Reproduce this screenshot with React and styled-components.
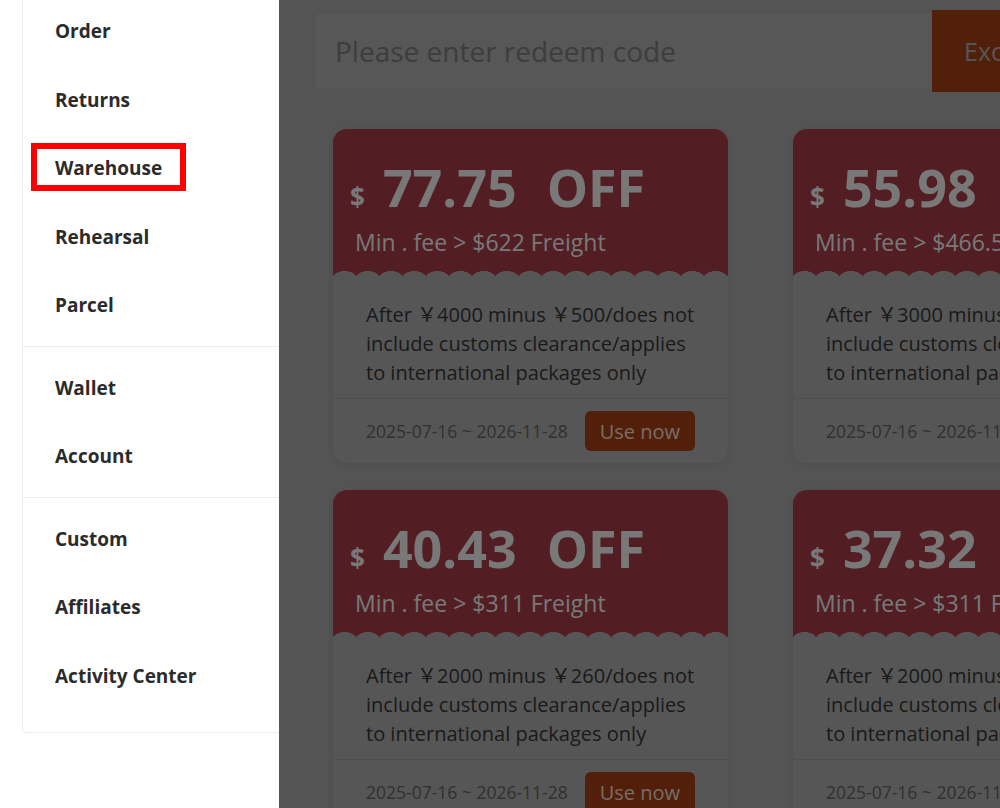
import React from 'react';
import styled, { createGlobalStyle } from 'styled-components';

const GlobalStyle = createGlobalStyle`
  html, body {
    margin: 0;
    padding: 0;
    background: #fff;
    overflow: hidden;
  }
  body {
    font-family: "Open Sans", "Noto Sans", "Noto Sans CJK SC", sans-serif;
  }
`;

const menuGroups = [
  ['Order', 'Returns', 'Warehouse', 'Rehearsal', 'Parcel'],
  ['Wallet', 'Account'],
  ['Custom', 'Affiliates', 'Activity Center'],
];

const coupons = [
  { amount: '77.75', min: '$622', rule: 'After ￥4000 minus ￥500/does not include customs clearance/applies to international packages only' },
  { amount: '55.98', min: '$466.56', rule: 'After ￥3000 minus ￥380/does not include customs clearance/applies to international packages only' },
  { amount: '40.43', min: '$311', rule: 'After ￥2000 minus ￥260/does not include customs clearance/applies to international packages only' },
  { amount: '37.32', min: '$311', rule: 'After ￥2000 minus ￥240/does not include customs clearance/applies to international packages only' },
];

const App = () => {
  return (
    <>
      <GlobalStyle />
      <Page>
        <SideColumn>
          <SideCard>
            {menuGroups.map((group, gi) => (
              <MenuGroup key={gi} last={gi === menuGroups.length - 1}>
                {group.map((name) => (
                  <MenuItem key={name} highlight={name === 'Warehouse'}>
                    {name}
                  </MenuItem>
                ))}
              </MenuGroup>
            ))}
          </SideCard>
        </SideColumn>

        <Main>
          <RedeemRow>
            <RedeemInput placeholder="Please enter redeem code" />
            <ExchangeButton>Exchange</ExchangeButton>
          </RedeemRow>

          <CouponGrid>
            {coupons.map((c) => (
              <Coupon key={c.amount}>
                <CouponHead>
                  <PriceLine>
                    <Dollar>$</Dollar>
                    <Amount>{c.amount}</Amount>
                    <Off>OFF</Off>
                  </PriceLine>
                  <MinFee>Min . fee &gt; {c.min} Freight</MinFee>
                </CouponHead>
                <CouponBody>
                  <Rule>{c.rule}</Rule>
                </CouponBody>
                <CouponFoot>
                  <Dates>2025-07-16 ~ 2026-11-28</Dates>
                  <UseButton>Use now</UseButton>
                </CouponFoot>
              </Coupon>
            ))}
          </CouponGrid>

          <Mask />
        </Main>
      </Page>
    </>
  );
};

export default App;

const Page = styled.div`
  display: flex;
  width: 1000px;
  height: 808px;
  overflow: hidden;
`;

const SideColumn = styled.aside`
  flex: 0 0 279px;
  padding-left: 22px;
  box-sizing: border-box;
  background: #fff;
`;

const SideCard = styled.nav`
  margin-top: -11px;
  border: 1px solid #ececec;
  border-right: none;
  border-radius: 4px 0 0 4px;
  background: #fff;
`;

const MenuGroup = styled.ul`
  list-style: none;
  margin: 0;
  padding: 7px 0 ${(p) => (p.last ? '22px' : '6px')};
  border-bottom: ${(p) => (p.last ? 'none' : '1px solid #ececec')};
`;

const MenuItem = styled.li`
  position: relative;
  height: 68.5px;
  display: flex;
  align-items: center;
  padding-left: 32px;
  font-size: 19px;
  font-weight: 700;
  color: #2b2b2b;

  ${(p) =>
    p.highlight &&
    `
    &::after {
      content: '';
      position: absolute;
      left: 8px;
      top: 9px;
      width: 155px;
      height: 48px;
      box-sizing: border-box;
      border: 6px solid #ff0000;
    }
  `}
`;

const Main = styled.main`
  position: relative;
  flex: 1;
  padding: 10px 0 0 35px;
  background: #a8a8a8;
  min-width: 0;
`;

const Mask = styled.div`
  position: absolute;
  inset: 0;
  background: rgba(0, 0, 0, 0.5);
`;

const RedeemRow = styled.div`
  display: flex;
  align-items: center;
  width: 1000px;
`;

const RedeemInput = styled.input`
  width: 618px;
  height: 78px;
  box-sizing: border-box;
  border: 1px solid #a2a2a2;
  border-right: none;
  border-radius: 4px 0 0 4px;
  background: #aeaeae;
  padding: 0 20px;
  font-family: "Open Sans", sans-serif;
  font-size: 28px;
  outline: none;

  &::placeholder {
    color: #7a7a7a;
  }
`;

const ExchangeButton = styled.button`
  height: 82px;
  width: 160px;
  border: none;
  background: #a44014;
  color: #ababab;
  font-family: "Open Sans", sans-serif;
  font-size: 25px;
  text-align: left;
  padding-left: 32px;
  white-space: nowrap;
`;

const CouponGrid = styled.div`
  display: grid;
  grid-template-columns: 395px 395px;
  column-gap: 65px;
  row-gap: 27px;
  margin: 37px 0 0 19px;
  width: 900px;
`;

const Coupon = styled.div`
  height: 334px;
  display: flex;
  flex-direction: column;
  background: #acacac;
  border-radius: 14px;
  box-shadow: 0 2px 8px rgba(0, 0, 0, 0.08);
  overflow: hidden;
`;

const CouponHead = styled.div`
  position: relative;
  height: 149px;
  box-sizing: border-box;
  padding: 26px 0 0 17px;
  background: #a43c46;
  color: #f0f0f0;

  &::after {
    content: '';
    position: absolute;
    left: 0;
    right: 0;
    bottom: 0;
    height: 7px;
    background: radial-gradient(ellipse 12px 7px at 50% 100%, #acacac 97%, transparent 100%) repeat-x;
    background-size: 23.2px 7px;
  }
`;

const PriceLine = styled.div`
  display: flex;
  align-items: baseline;
  line-height: 64px;
  font-weight: 700;
  white-space: nowrap;
`;

const Dollar = styled.span`
  font-size: 26px;
  margin-right: 18px;
`;

const Amount = styled.span`
  font-size: 52px;
`;

const Off = styled.span`
  font-size: 52px;
  margin-left: 30px;
`;

const MinFee = styled.div`
  padding-left: 5px;
  margin-top: -2px;
  font-size: 23px;
  line-height: 30px;
  white-space: nowrap;
`;

const CouponBody = styled.div`
  padding: 22px 33px 11px 33px;
  border-bottom: 1px solid #9e9e9e;
`;

const Rule = styled.p`
  margin: 0;
  font-size: 20px;
  line-height: 29px;
  color: #353535;
`;

const CouponFoot = styled.div`
  flex: 1;
  display: flex;
  align-items: center;
  padding: 0 0 0 33px;
  gap: 17px;
  white-space: nowrap;
`;

const Dates = styled.span`
  flex: none;
  font-size: 17.5px;
  color: #626262;
`;

const UseButton = styled.button`
  flex: none;
  height: 40px;
  padding: 0 15px;
  border: none;
  border-radius: 6px;
  background: #a44014;
  color: #f0d8cc;
  font-family: "Open Sans", sans-serif;
  font-size: 20px;
  white-space: nowrap;
`;
